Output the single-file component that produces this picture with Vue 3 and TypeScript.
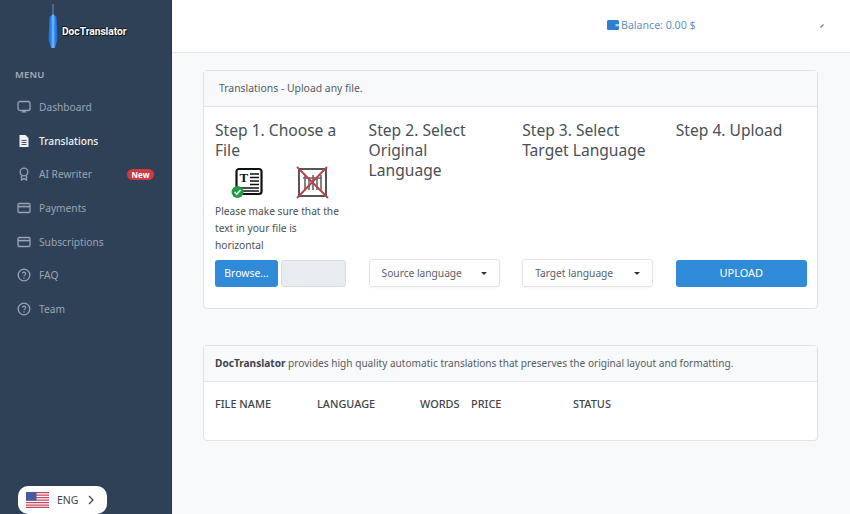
<script setup lang="ts">
const menu = [
  { label: 'Dashboard', icon: 'screen' },
  { label: 'Translations', icon: 'file', active: true },
  { label: 'AI Rewriter', icon: 'award', badge: 'New' },
  { label: 'Payments', icon: 'card' },
  { label: 'Subscriptions', icon: 'card' },
  { label: 'FAQ', icon: 'help' },
  { label: 'Team', icon: 'help' },
]
</script>

<template>
  <div class="app">
    <aside class="sidebar">
      <div class="logo">
        <svg class="tower" width="10" height="44" viewBox="0 0 10 44">
          <defs>
            <linearGradient id="tw" x1="0" x2="1" y1="0" y2="0">
              <stop offset="0" stop-color="#1668e0" />
              <stop offset="0.3" stop-color="#2f86ea" />
              <stop offset="0.5" stop-color="#7fbdf4" />
              <stop offset="0.7" stop-color="#2f86ea" />
              <stop offset="1" stop-color="#1668e0" />
            </linearGradient>
          </defs>
          <line x1="5" y1="0" x2="5" y2="11" stroke="#6d8fb5" stroke-width="1" />
          <path d="M1.5 13 L5 10 L8.5 13 L9.5 35 L7 44 L3 44 L0.5 35 Z" fill="url(#tw)" />
        </svg>
        <span class="logo-text">DocTranslator</span>
      </div>
      <div class="menu-title">MENU</div>
      <nav class="menu">
        <a v-for="m in menu" :key="m.label" class="item" :class="{ active: m.active }">
          <svg class="ico" width="14" height="14" viewBox="0 0 14 14" fill="none" stroke="currentColor" stroke-width="1.3">
            <template v-if="m.icon === 'screen'">
              <rect x="1" y="1.5" width="12" height="9" rx="2" />
              <path d="M4.5 12.5 L7 9.5 L9.5 12.5 Z" fill="currentColor" stroke="none" />
            </template>
            <template v-else-if="m.icon === 'file'">
              <path d="M2.5 1 H8.5 L11.5 4 V13 H2.5 Z" fill="currentColor" stroke="none" />
              <path d="M4.5 6.5 H9.5 M4.5 8.5 H9.5 M4.5 10.5 H9.5" stroke="#2f4156" stroke-width="0.9" />
            </template>
            <template v-else-if="m.icon === 'award'">
              <circle cx="7" cy="5" r="3.8" />
              <path d="M4.5 8.5 V13 L7 11.6 L9.5 13 V8.5" />
            </template>
            <template v-else-if="m.icon === 'card'">
              <rect x="1" y="2.5" width="12" height="9" rx="1.2" />
              <path d="M1 5.6 H13" stroke-width="1.6" />
            </template>
            <template v-else>
              <circle cx="7" cy="7" r="5.8" />
              <path d="M5.4 5.6 C5.4 3.6 8.7 3.6 8.7 5.6 C8.7 6.9 7 6.8 7 8.3" stroke-width="1.1" />
              <circle cx="7" cy="10" r="0.7" fill="currentColor" stroke="none" />
            </template>
          </svg>
          <span>{{ m.label }}</span>
          <span v-if="m.badge" class="badge">{{ m.badge }}</span>
        </a>
      </nav>
      <div class="lang">
        <svg width="23" height="16" viewBox="0 0 23 16">
          <rect width="23" height="16" fill="#fff" />
          <path d="M0 .6H23M0 3H23M0 5.5H23M0 8H23M0 10.5H23M0 13H23M0 15.4H23" stroke="#c0475c" stroke-width="1.25" />
          <rect width="10.5" height="8.6" fill="#4a5a9c" />
        </svg>
        <span class="lang-text">ENG</span>
        <svg width="8" height="10" viewBox="0 0 8 10" fill="none" stroke="#444" stroke-width="1.3">
          <path d="M2 1 L6 5 L2 9" />
        </svg>
      </div>
    </aside>
    <main class="main">
      <header class="topbar">
        <div class="balance">
          <svg width="12" height="10" viewBox="0 0 12 10">
            <rect width="12" height="10" rx="1.5" fill="#2f7fd1" />
            <rect x="8.5" y="4" width="3.5" height="2.4" fill="#a8cdf0" />
          </svg>
          <span>Balance: 0.00 $</span>
        </div>
        <svg class="caret" width="4" height="4" viewBox="0 0 4 4">
          <path d="M0.5 3.5 L3.5 0.5" stroke="#777" stroke-width="1.1" />
        </svg>
      </header>
      <div class="content">
        <section class="card">
          <div class="card-head">Translations - Upload any file.</div>
          <div class="steps">
            <div class="step">
              <h3>Step 1. Choose a File</h3>
              <div class="samples">
                <svg width="34" height="34" viewBox="0 0 34 34">
                  <rect x="5.5" y="3" width="25" height="25" rx="2.5" fill="#fff" stroke="#111" stroke-width="2.2" />
                  <text x="8.5" y="16" font-size="13" font-weight="700" font-family="Liberation Serif, serif" fill="#111">T</text>
                  <path d="M19 8H28M19 11.5H28M19 15H28M19 18.5H28M9 22H28M9 25H28" stroke="#111" stroke-width="1.5" />
                  <circle cx="6.5" cy="26" r="6" fill="#1f9d45" />
                  <path d="M3.6 26 L5.8 28.2 L9.6 24" stroke="#fff" stroke-width="1.6" fill="none" />
                </svg>
                <svg width="34" height="34" viewBox="0 0 34 34">
                  <rect x="4" y="3" width="27" height="27" fill="#fff" stroke="#555" stroke-width="2" />
                  <path d="M10 9V24M14 12V24M18 9V24M22 12V24M26 9V24M8 12H27" stroke="#666" stroke-width="1.6" />
                  <path d="M2 1 L33 32 M32 1 L2 32" stroke="#b9404a" stroke-width="1.8" />
                </svg>
              </div>
              <p class="note">Please make sure that the text in your file is horizontal</p>
              <div class="controls file">
                <button class="btn browse">Browse...</button>
                <div class="filename"></div>
              </div>
            </div>
            <div class="step">
              <h3>Step 2. Select Original Language</h3>
              <div class="controls"><div class="select"><span>Source language</span><i></i></div></div>
            </div>
            <div class="step">
              <h3>Step 3. Select Target Language</h3>
              <div class="controls"><div class="select"><span>Target language</span><i></i></div></div>
            </div>
            <div class="step">
              <h3>Step 4. Upload</h3>
              <div class="controls"><button class="btn upload">UPLOAD</button></div>
            </div>
          </div>
        </section>
        <section class="card second">
          <div class="card-head info"><b>DocTranslator</b> provides high quality automatic translations that preserves the original layout and formatting.</div>
          <div class="cols">
            <span class="c1">FILE NAME</span>
            <span class="c2">LANGUAGE</span>
            <span class="c3">WORDS</span>
            <span class="c4">PRICE</span>
            <span class="c5">STATUS</span>
          </div>
        </section>
      </div>
    </main>
  </div>
</template>

<style>
html, body { margin: 0; padding: 0; }
</style>

<style scoped>
.app {
  display: flex;
  width: 850px;
  height: 514px;
  overflow: hidden;
  font-family: "Noto Sans", sans-serif;
  color: #495057;
  background: #f8f9fa;
}
.sidebar {
  position: relative;
  flex: 0 0 172px;
  box-sizing: border-box;
  background: #2f4156;
  border-right: 1px solid #293a4d;
  display: flex;
  flex-direction: column;
}
.logo {
  padding: 4px 0 0 48px;
  height: 44px;
  display: flex;
  align-items: center;
  gap: 4px;
}
.logo-text {
  margin-top: 11px;
  font: 700 10.2px "Roboto", sans-serif;
  color: #fff;
  line-height: 11px;
  text-shadow: 1px 1px 0 #10161d, -1px 0 0 #10161d, 0 -1px 0 #10161d;
}
.menu-title {
  margin: 20px 0 0 15px;
  font-size: 9.5px;
  font-weight: 600;
  letter-spacing: 0.2px;
  line-height: 13px;
  color: #a3adb9;
}
.menu { margin-top: 9px; display: flex; flex-direction: column; }
.item {
  height: 33.7px;
  display: flex;
  align-items: center;
  padding-left: 17px;
  font-size: 10.2px;
  color: #97a5b5;
}
.item.active { color: #eef2f6; font-weight: 500; }
.ico { flex: none; margin-right: 8px; }
.badge {
  margin-left: auto;
  margin-right: 17px;
  padding: 0 4.5px;
  height: 11px;
  line-height: 11px;
  border-radius: 6px;
  background: #cf3a3e;
  color: #fff;
  font-size: 8px;
  font-weight: 700;
}
.lang {
  position: absolute;
  left: 18px;
  top: 486px;
  width: 89px;
  height: 28px;
  box-sizing: border-box;
  padding: 0 12px 0 8px;
  background: #fff;
  display: flex;
  align-items: center;
  gap: 8px;
  border-radius: 10px;
}
.lang-text { flex: 1; font-size: 10.5px; color: #444; }
.main { flex: 1; min-width: 0; }
.topbar {
  height: 52px;
  background: #fff;
  border-bottom: 1px solid #e4e7ea;
  position: relative;
  display: flex;
  align-items: center;
  padding-left: 435px;
}
.balance {
  display: flex;
  align-items: center;
  gap: 2px;
  color: #5f93c6;
  font-size: 10.6px;
  margin-top: -2px;
}
.caret { position: absolute; left: 648px; top: 24px; }
.content { padding: 17px 32px 0 31px; }
.card {
  background: #fff;
  border: 1px solid #dfe2e6;
  border-radius: 4px;
  box-sizing: border-box;
  height: 239px;
}
.card.second { height: 96px; margin-top: 36px; }
.card-head {
  height: 36px;
  box-sizing: border-box;
  padding: 0 15px 2px;
  display: flex;
  align-items: center;
  background: #f8f9fa;
  border-bottom: 1px solid #dfe2e6;
  font-size: 10.4px;
  color: #555c63;
}
.card-head.info { display: block; line-height: 35px; padding: 0 11px; font-size: 10.1px; }
.card-head b { font-weight: 700; color: #3d444b; }
.steps {
  display: grid;
  grid-template-columns: repeat(4, 131px);
  column-gap: 22.6px;
  padding: 13px 11px 0;
}
.step { display: flex; flex-direction: column; height: 167px; }
h3 {
  margin: 0;
  font-size: 15.6px;
  font-weight: 400;
  line-height: 20px;
  color: #495057;
}
.samples { display: flex; gap: 30px; margin: 0 0 0 16px; padding-top: 6px; }
.note {
  margin: 3px 0 0;
  font-size: 10.2px;
  line-height: 17px;
  color: #495057;
}
.controls { margin-top: auto; display: flex; gap: 3px; }
.btn {
  height: 27px;
  border: 0;
  border-radius: 3px;
  background: #2f8ad8;
  color: #fff;
  font: 400 10.4px "Noto Sans", sans-serif;
  padding: 0 0 2px;
}
.browse { width: 63px; flex: none; }
.upload { width: 100%; font-size: 11px; }
.filename {
  flex: 1;
  height: 27px;
  box-sizing: border-box;
  border: 1px solid #d8dce0;
  border-radius: 3px;
  background: #e9ecef;
}
.select {
  width: 100%;
  height: 28px;
  box-sizing: border-box;
  border: 1px solid #e2e5e8;
  border-radius: 3px;
  display: flex;
  align-items: center;
  justify-content: space-between;
  padding: 0 12px;
  font-size: 10.2px;
  color: #5a6169;
  box-shadow: 0 1px 2px rgba(0,0,0,.05);
}
.select i {
  width: 0; height: 0;
  border-left: 3px solid transparent;
  border-right: 3px solid transparent;
  border-top: 3px solid #333;
}
.cols {
  display: flex;
  padding: 14px 11px 0;
  font-size: 10.9px;
  font-weight: 500;
  color: #3d444b;
}
.c1 { width: 102px; }
.c2 { width: 103px; }
.c3 { width: 51px; }
.c4 { width: 102px; }
</style>
